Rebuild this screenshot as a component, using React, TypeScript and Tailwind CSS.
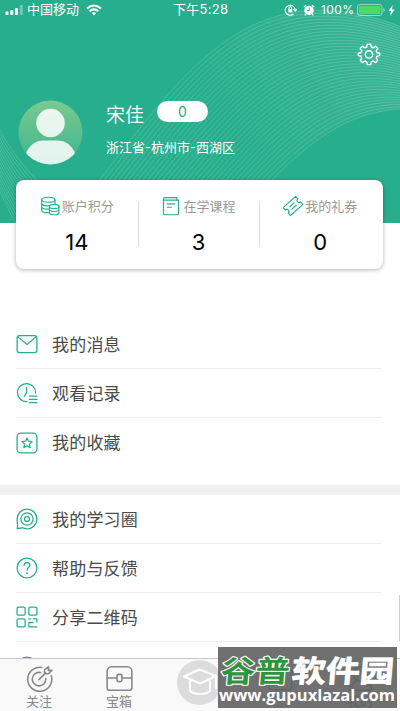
import type { ReactNode } from 'react'

const outer = [70, 217, 175, 90, 238, -42, 412, 31]
const inner = [236, 217, 286, 166, 330, 112, 402, 109]
const LINES = 36

function HeaderPattern() {
  return (
    <svg className="absolute inset-0" width="400" height="223" viewBox="0 0 400 223" fill="none">
      <defs>
        <linearGradient id="sheen" x1="120" y1="200" x2="400" y2="30" gradientUnits="userSpaceOnUse">
          <stop offset="0.4" stopColor="#fff" stopOpacity="0" />
          <stop offset="1" stopColor="#fff" stopOpacity="0.08" />
        </linearGradient>
      </defs>
      <path d="M70 217C175 90 238 -42 412 31V109H402C330 112 286 166 236 217Z" fill="url(#sheen)" />
      {Array.from({ length: LINES }, (_, i) => {
        const p = outer.map((v, k) => (v + ((inner[k] - v) * i) / (LINES - 1)).toFixed(1))
        return (
          <path
            key={i}
            d={`M${p[0]} ${p[1]}C${p[2]} ${p[3]} ${p[4]} ${p[5]} ${p[6]} ${p[7]}`}
            stroke="#fff"
            strokeOpacity="0.17"
          />
        )
      })}
      {Array.from({ length: 16 }, (_, i) => (
        <path
          key={i}
          d={`M-6 ${118 + i * 4}Q8 ${152 + i * 4} ${46 - i} ${190 + i * 4}`}
          stroke="#fff"
          strokeOpacity="0.16"
        />
      ))}
    </svg>
  )
}

function Icon({ size = 24, className = '', children }: { size?: number; className?: string; children: ReactNode }) {
  return (
    <svg
      className={`shrink-0 ${className}`}
      width={size}
      height={size}
      viewBox="0 0 24 24"
      fill="none"
      stroke="currentColor"
      strokeWidth="1.4"
      strokeLinecap="round"
      strokeLinejoin="round"
    >
      {children}
    </svg>
  )
}

function StatusBar() {
  return (
    <div className="relative flex h-5 items-center text-[12px] text-white">
      <svg className="ml-[5px]" width="19" height="12" viewBox="0 0 19 12" fill="#fff">
        <rect x="0.5" y="7.5" width="3" height="3.5" rx="0.8" />
        <rect x="5.3" y="6" width="3" height="5" rx="0.8" />
        <rect x="10" y="4" width="3" height="7" rx="0.8" />
        <rect x="14.8" y="1" width="3" height="10" rx="0.8" opacity="0.35" />
      </svg>
      <span className="ml-[3px] w-[53px] text-[13px]">中国移动</span>
      <svg className="ml-[6px]" width="16" height="12" viewBox="0 0 16 12" fill="none" stroke="#fff" strokeWidth="2">
        <path d="M1 4.6Q8-1.6 15 4.6M3.6 7.3Q8 3.4 12.4 7.3" />
        <path d="M5.8 9.1Q8 7.3 10.2 9.1L8 11.4Z" fill="#fff" stroke="none" />
      </svg>
      <span className="absolute left-[173px] text-[13px] tracking-[0.3px]">下午5:28</span>
      <svg className="absolute left-[284px]" width="13" height="12" viewBox="0 0 13 12" fill="none" stroke="#fff" strokeWidth="1.1">
        <path d="M9.5 10A5 5 0 1 1 11.2 6M9.3 5.2L11.3 7.2L12.8 5" />
        <path d="M5 5.4V4.2a1.3 1.3 0 0 1 2.6 0v1.2" />
        <rect x="4.3" y="5.2" width="4" height="3.2" fill="#fff" stroke="none" />
      </svg>
      <svg className="absolute left-[303px]" width="12" height="12" viewBox="0 0 12 12">
        <circle cx="6" cy="6.4" r="4.7" fill="#fff" />
        <path d="M1 3L3 1.2M11 3L9 1.2M2.8 10.2L1.8 11.4M9.2 10.2L10.2 11.4" stroke="#fff" strokeWidth="1.4" />
        <path d="M6.2 3.6V6.6H3.8" stroke="#27ae8c" fill="none" />
      </svg>
      <span className="absolute left-[321px] tracking-[0.4px]">100%</span>
      <svg className="absolute left-[357px]" width="29" height="12" viewBox="0 0 29 12">
        <rect x="0.5" y="0.5" width="24.5" height="11" rx="2.5" fill="none" stroke="#fff" strokeOpacity="0.5" />
        <rect x="2" y="2" width="21.5" height="8" rx="1" fill="#4cd964" />
        <path d="M26.3 4v4q1.5-0.6 1.5-2t-1.5-2" fill="#fff" fillOpacity="0.5" />
      </svg>
      <svg className="absolute left-[388px]" width="7" height="11" viewBox="0 0 7 11" fill="#fff">
        <path d="M4.6 0L0.5 6H3L2.2 11L6.6 4.6H4Z" />
      </svg>
    </div>
  )
}

function Profile() {
  return (
    <div className="relative mt-[80px] flex px-[18px]">
      <svg width="65" height="65" viewBox="0 0 65 65">
        <defs>
          <linearGradient id="avatar" x1="0" y1="0" x2="0" y2="1">
            <stop offset="0" stopColor="#7bc990" />
            <stop offset="1" stopColor="#3cb58f" />
          </linearGradient>
          <clipPath id="round">
            <circle cx="32.5" cy="32.5" r="32" />
          </clipPath>
        </defs>
        <circle cx="32.5" cy="32.5" r="32" fill="url(#avatar)" />
        <g fill="#fff" fillOpacity="0.85" clipPath="url(#round)">
          <circle cx="32.5" cy="23" r="14.3" />
          <path d="M7.5 53.5Q14 40.5 25 40.5H40Q51 40.5 57.5 53.5L50 65H15Z" />
        </g>
      </svg>
      <div className="ml-[23px] text-white">
        <div className="flex h-[27px] items-center">
          <span className="mt-[3px] w-[39px] text-[19px] leading-[27px] font-[350]">宋佳</span>
          <span className="-mt-[4px] ml-[12px] flex h-[21px] w-[51px] items-center justify-center rounded-full bg-white text-[14px] text-[#27ae8c]">
            0
          </span>
        </div>
        <p className="mt-[11px] text-[13px] leading-[18px]">浙江省-杭州市-西湖区</p>
      </div>
    </div>
  )
}

const stats = [
  {
    label: '账户积分',
    value: 14,
    icon: (
      <>
        <ellipse cx="10" cy="4.5" rx="8" ry="3" />
        <path d="M2 4.5V17c0 2 3.5 3 8 3M18 4.5V9M2 9c0 2 4 3.2 9 2.7M2 13c0 2 4 3 8 2.8" />
        <ellipse cx="17" cy="12.5" rx="5.7" ry="2.5" />
        <path d="M11.3 12.5V20c0 3.3 11.4 3.3 11.4 0v-7.5M11.3 16.3c0 3 11.4 3 11.4 0" />
      </>
    ),
  },
  {
    label: '在学课程',
    value: 3,
    icon: (
      <>
        <path d="M3 3.5V21a1.5 1.5 0 0 0 1.5 1.5h15A1.5 1.5 0 0 0 21 21V5H4.5a1.5 1.5 0 0 1 0-3H19v3" />
        <path d="M7.5 9.5h9M7.5 13.5h5" />
      </>
    ),
  },
  {
    label: '我的礼券',
    value: 0,
    icon: (
      <g transform="rotate(-42 12 12)">
        <path d="M2 5.5H22V9.5a2.5 2.5 0 0 0 0 5V18.5H2V14.5a2.5 2.5 0 0 0 0-5Z" />
        <path d="M8.5 10H15.5M8.5 14H15.5" />
      </g>
    ),
  },
]

function StatsCard() {
  return (
    <div className="relative mt-[15px] mr-[17px] ml-[16px] grid h-[89px] grid-cols-3 rounded-[8px] bg-white pr-[2px] shadow-[0_1px_4px_rgba(0,0,0,0.3)]">
      {stats.map((s, i) => (
        <div key={s.label} className="relative flex flex-col items-center">
          {i > 0 && <div className="absolute top-[21px] left-0 h-[46px] w-px bg-[#dcdcdc]" />}
          <div className="mt-[16px] flex h-[20px] items-center text-[#27ae8c]">
            <Icon size={20}>{s.icon}</Icon>
            <span className="mt-px ml-[2px] text-[13px] text-[#999]">{s.label}</span>
          </div>
          <span className="mt-[11px] text-[22px] leading-[30px] text-black">{s.value}</span>
        </div>
      ))}
    </div>
  )
}

const personal = [
  {
    label: '我的消息',
    icon: (
      <>
        <rect x="1.2" y="2.8" width="21.6" height="18.6" rx="2.5" />
        <path d="M2.5 4.5L12 12.5L21.5 4.5" />
      </>
    ),
  },
  {
    label: '观看记录',
    icon: (
      <>
        <path d="M12 21.5A9.9 9.9 0 1 1 21.4 12" />
        <path d="M11.5 6V12L9 15.5M14.5 15.5H22.8M14.5 19H22.8M14.5 22.5H22.8" />
      </>
    ),
  },
  {
    label: '我的收藏',
    icon: (
      <>
        <rect x="1.2" y="1.2" width="21.6" height="21.6" rx="4" />
        <path d="M12 6.5L13.7 10L17.5 10.5L14.7 13.2L15.4 17L12 15.2L8.6 17L9.3 13.2L6.5 10.5L10.3 10Z" />
      </>
    ),
  },
]

const more = [
  {
    label: '我的学习圈',
    icon: (
      <>
        <path d="M1.2 22.5C2.5 21 1.2 16 1.2 12A10.8 10.8 0 1 1 12 22.8C9 22.8 8 21.2 6.2 21.6C4 22.1 3 22.5 1.2 22.5Z" />
        <circle cx="12" cy="12" r="6.7" />
        <circle cx="12" cy="12" r="2.7" />
      </>
    ),
  },
  {
    label: '帮助与反馈',
    icon: (
      <>
        <circle cx="12" cy="12" r="10.8" />
        <path d="M8.8 9.3C8.8 4.8 15.2 5 15.2 9.2C15.2 11.5 12 11.7 12 14.2" />
        <path d="M12 17.6V17.8" strokeWidth="2" />
      </>
    ),
  },
  {
    label: '分享二维码',
    icon: (
      <>
        <rect x="1.2" y="1.2" width="8.8" height="8.8" rx="1.5" />
        <rect x="14" y="1.2" width="8.8" height="8.8" rx="1.5" />
        <rect x="1.2" y="14" width="8.8" height="8.8" rx="1.5" />
        <path d="M14 14H16M19 14H22.8V17.5M14 18H18.5M14 18V22.8M14 22.8H22.8" />
      </>
    ),
  },
  { label: '兑换券', icon: <circle cx="12" cy="12" r="10.8" /> },
]

function MenuList({ items }: { items: typeof personal }) {
  return (
    <ul className="mr-[18px] ml-[16px]">
      {items.map((item, i) => (
        <li
          key={item.label}
          className={`flex h-[49px] items-center text-[#27ae8c] ${i < items.length - 1 ? 'border-b border-[#ececec]' : ''}`}
        >
          <Icon size={22}>{item.icon}</Icon>
          <span className="mt-[3px] ml-[14px] text-[17px] tracking-[0.2px] text-[#4a4a4a]">{item.label}</span>
        </li>
      ))}
    </ul>
  )
}

function TabBar() {
  return (
    <nav className="absolute inset-x-0 bottom-0 grid h-[53px] grid-cols-5 border-t border-[#c8c8c8] bg-[#f9f9f9] text-[#888]">
      <div className="flex flex-col items-center pt-[6px] pr-[2px]">
        <Icon size={27}>
          <path d="M14 2.2A10.7 10.7 0 1 0 22.4 9.5M13 6.7A6 6 0 1 0 17.6 12" />
          <path d="M11.5 13L17.5 7M16.5 7.8V4.3L20 1.5V4.8H23L20 7.8Z" />
        </Icon>
        <span className="text-[13px] leading-[18px]">关注</span>
      </div>
      <div className="flex flex-col items-center pt-[6px] pr-[2px]">
        <Icon size={27}>
          <path d="M1 5.5A4 4 0 0 1 5 1.5H19A4 4 0 0 1 23 5.5V20.5A2 2 0 0 1 21 22.5H3A2 2 0 0 1 1 20.5Z" />
          <path d="M1 11.5H9.8M14.2 11.5H23" />
          <rect x="9.8" y="8.3" width="4.4" height="6.5" rx="1.5" />
        </Icon>
        <span className="text-[13px] leading-[18px]">宝箱</span>
      </div>
      <div className="flex justify-center">
        <svg width="46" height="47" viewBox="0 0 46 47" fill="none">
          <circle cx="22.5" cy="23.5" r="22.5" fill="#dcdcdc" />
          <path d="M7 17.5L22.5 10.5L39 17L23 24.5ZM13 21.5V32C18 36 28 36 33 32V21.5M39 17V30" stroke="#fff" strokeWidth="2" strokeLinejoin="round" />
        </svg>
      </div>
      <div className="flex justify-center pt-[6px]">
        <Icon size={27}>
          <rect x="2" y="2" width="20" height="20" rx="3" />
        </Icon>
      </div>
      <div className="flex flex-col items-center pt-[6px] text-[#27ae8c]">
        <Icon size={27}>
          <circle cx="12" cy="8" r="6.5" />
          <path d="M9 13L2 20Q1 22.5 4 22.5H20Q23 22.5 21 18.5Q19.5 16 16 14" />
        </Icon>
        <span className="text-[13px] leading-[18px]">我的</span>
      </div>
    </nav>
  )
}

function Watermark() {
  return (
    <div className="absolute top-[647px] left-[218px] h-[61px] w-[179px] bg-[#606060]/90">
      <svg
        width="179"
        height="61"
        viewBox="0 0 179 61"
        fontFamily="'Noto Sans CJK SC', sans-serif"
        fontWeight="700"
        strokeLinejoin="round"
      >
        <g fontSize="30" transform="skewX(-5)">
          <text x="5" y="35" textLength="69" fill="#2f9440" stroke="#fff" strokeWidth="2.2" paintOrder="stroke" lengthAdjust="spacingAndGlyphs">
            谷普
          </text>
          <text x="76" y="35" textLength="102" fill="#fff" stroke="#fff" strokeWidth="0.8" lengthAdjust="spacingAndGlyphs">
            软件园
          </text>
        </g>
        <text
          x="1"
          y="54"
          textLength="176"
          lengthAdjust="spacingAndGlyphs"
          fontFamily="'Open Sans', sans-serif"
          fontWeight="700"
          fontSize="16"
          fill="#fff"
        >
          www.gupuxlazal.com
        </text>
      </svg>
    </div>
  )
}

export default function App() {
  return (
    <div className="relative h-[711px] w-[400px] overflow-hidden bg-white font-['Inter','Noto_Sans_CJK_SC',sans-serif]">
      <header className="relative h-[223px] bg-[#27ae8c]">
        <HeaderPattern />
        <StatusBar />
        <Icon size={24} className="absolute top-[42px] right-[19px] text-white">
          <path d="M10.3 2.2H13.7L14.3 5L16.2 5.8L18.6 4.2L20.8 6.5L19.2 8.9L20 10.7L22.7 11.2V13.6L20 14.2L19.2 16L20.8 18.3L18.6 20.6L16.2 19L14.3 19.8L13.7 22.6H10.3L9.7 19.8L7.8 19L5.4 20.6L3.2 18.3L4.8 16L4 14.2L1.3 13.6V11.2L4 10.7L4.8 8.9L3.2 6.5L5.4 4.2L7.8 5.8L9.7 5Z" />
          <circle cx="12" cy="12.4" r="3.7" />
        </Icon>
        <Profile />
        <StatsCard />
      </header>
      <div className="h-[97px]" />
      <MenuList items={personal} />
      <div className="mt-[18px] h-[10px] bg-[#f0f0f0]" />
      <MenuList items={more} />
      <div className="absolute top-[595px] right-0 h-[46px] w-px bg-[#a9dfcb]" />
      <TabBar />
      <Watermark />
    </div>
  )
}
